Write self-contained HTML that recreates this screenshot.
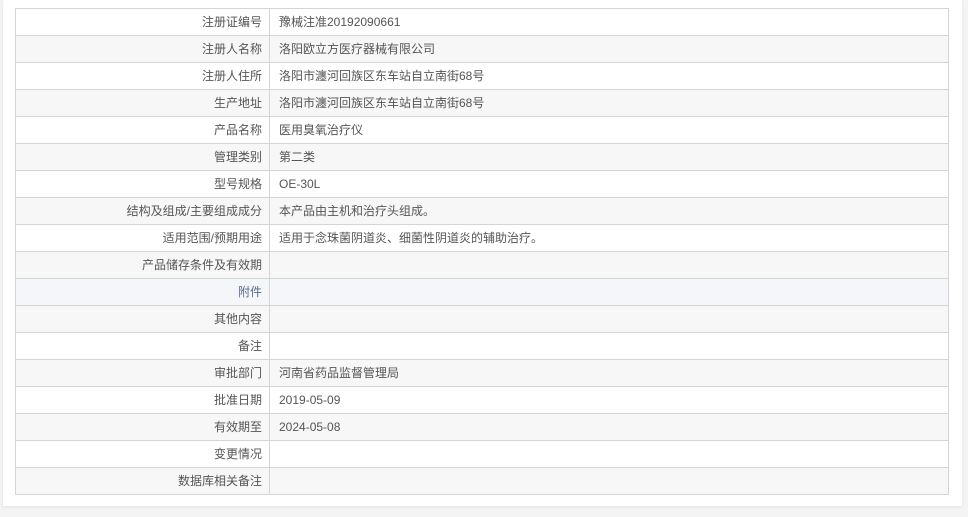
<!DOCTYPE html>
<html><head><meta charset="utf-8">
<style>
html,body{margin:0;padding:0;width:968px;height:517px;background:#f4f4f4;overflow:hidden}
.card{position:absolute;left:3px;top:0;width:959px;height:506px;background:#fff;box-shadow:0 1px 3px rgba(0,0,0,.08)}
table{position:absolute;left:12px;top:8px;width:934px;border-collapse:collapse;font-family:"Liberation Sans","Noto Sans CJK SC",sans-serif;font-size:12px;color:#555}
td{height:26px;border:1px solid #d4d4d4;padding:0 9px;line-height:26px;white-space:nowrap}
td.l{width:237px;text-align:right;padding-right:7px}
tr:nth-child(even) td{background:#f7f7f7}
tr.h td{background:#f4f6fa}
tr.h td.l{color:#5a6a8a}
</style></head><body>
<div class="card">
<table>
<tr><td class="l">注册证编号</td><td>豫械注准20192090661</td></tr>
<tr><td class="l">注册人名称</td><td>洛阳欧立方医疗器械有限公司</td></tr>
<tr><td class="l">注册人住所</td><td>洛阳市瀍河回族区东车站自立南街68号</td></tr>
<tr><td class="l">生产地址</td><td>洛阳市瀍河回族区东车站自立南街68号</td></tr>
<tr><td class="l">产品名称</td><td>医用臭氧治疗仪</td></tr>
<tr><td class="l">管理类别</td><td>第二类</td></tr>
<tr><td class="l">型号规格</td><td>OE-30L</td></tr>
<tr><td class="l">结构及组成/主要组成成分</td><td>本产品由主机和治疗头组成。</td></tr>
<tr><td class="l">适用范围/预期用途</td><td>适用于念珠菌阴道炎、细菌性阴道炎的辅助治疗。</td></tr>
<tr><td class="l">产品储存条件及有效期</td><td></td></tr>
<tr class="h"><td class="l">附件</td><td></td></tr>
<tr><td class="l">其他内容</td><td></td></tr>
<tr><td class="l">备注</td><td></td></tr>
<tr><td class="l">审批部门</td><td>河南省药品监督管理局</td></tr>
<tr><td class="l">批准日期</td><td>2019-05-09</td></tr>
<tr><td class="l">有效期至</td><td>2024-05-08</td></tr>
<tr><td class="l">变更情况</td><td></td></tr>
<tr><td class="l">数据库相关备注</td><td></td></tr>
</table>
</div>
</body></html>
